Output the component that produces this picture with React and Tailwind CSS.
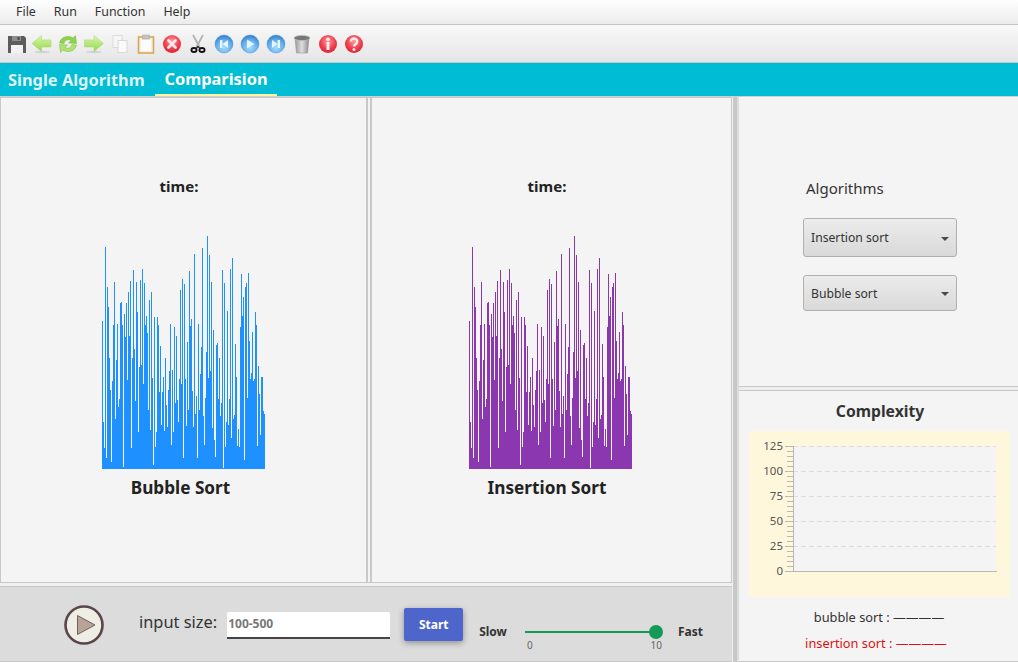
const FONT = 'font-["Noto_Sans","Open_Sans",sans-serif]'

// bar tops measured from the reference, bottom of the chart is 239
const BAR_TOPS = [
  273,576,654,52,684,171,231,384,480,696,453,285,156,567,390,282,531,507,219,216,285,711,252,321,219,450,186,318,153,654,384,120,357,513,156,246,606,411,150,405,117,462,159,285,258,309,540,210,600,186,444,705,261,651,606,261,285,486,348,585,486,441,603,384,525,591,480,423,282,645,420,606,291,519,318,510,576,447,180,462,147,684,162,447,588,336,540,123,288,267,483,591,72,552,498,684,282,540,432,351,54,558,645,504,366,18,444,75,423,156,594,300,630,681,345,339,507,384,558,519,120,714,159,651,576,243,585,507,117,624,84,567,555,342,441,648,597,651,291,132,258,201,690,171,159,504,129,333,447,429,306,453,447,246,285,648,408,492,615,441,441,543,552,
]

function Bars({ color }) {
  return (
    <svg width="163" height="239" shapeRendering="crispEdges" className="block">
      {BAR_TOPS.map((t, i) => (
        <rect key={i} x={i} y={Math.round(t / 3)} width="1" height={239 - Math.round(t / 3)} fill={color} />
      ))}
    </svg>
  )
}

function Defs() {
  return (
    <svg width="0" height="0" className="absolute">
      <defs>
        <linearGradient id="grn" x1="0" y1="0" x2="0" y2="1">
          <stop offset="0" stopColor="#dcf7a8" />
          <stop offset="1" stopColor="#92d84e" />
        </linearGradient>
        <radialGradient id="red" cx="0.5" cy="0.35" r="0.7">
          <stop offset="0" stopColor="#ff9a9f" />
          <stop offset="0.6" stopColor="#ee3d4b" />
          <stop offset="1" stopColor="#d81f35" />
        </radialGradient>
        <radialGradient id="blu" cx="0.5" cy="0.7" r="0.7">
          <stop offset="0" stopColor="#a5dcfa" />
          <stop offset="0.6" stopColor="#62aeec" />
          <stop offset="1" stopColor="#2f7cc9" />
        </radialGradient>
        <linearGradient id="can" x1="0" y1="0" x2="1" y2="0">
          <stop offset="0" stopColor="#9a9a9a" />
          <stop offset="0.5" stopColor="#dedede" />
          <stop offset="1" stopColor="#8a8a8a" />
        </linearGradient>
      </defs>
    </svg>
  )
}

const Ico = ({ children }) => (
  <svg width="20" height="20" viewBox="0 0 20 20" className="block shrink-0">{children}</svg>
)

const IconSave = () => (
  <Ico>
    <path d="M2 2h16l2 2v15H2z" fill="#5c5c5c" />
    <rect x="6" y="2" width="9" height="5" fill="#8d8d8d" />
    <rect x="11.500" y="3" width="2" height="3" fill="#4c4c4c" />
    <rect x="5" y="11" width="12" height="8" fill="#f2f2f2" />
  </Ico>
)
const IconLeft = () => (
  <Ico>
    <ellipse cx="10" cy="18" rx="8" ry="1.200" fill="#d0d0d0" />
    <path d="M0 9.500 9.500 1.500v4.500H19v7H9.500v4.500z" fill="url(#grn)" stroke="#a5d56e" strokeWidth="0.500" />
  </Ico>
)
const IconRight = () => (
  <Ico>
    <ellipse cx="10" cy="18" rx="8" ry="1.200" fill="#d0d0d0" />
    <path d="M19.500 9.500 10 1.500v4.500H0.500v7H10v4.500z" fill="url(#grn)" stroke="#a5d56e" strokeWidth="0.500" />
  </Ico>
)
const IconRefresh = () => (
  <Ico>
    <path d="M1.500 9a8.500 8 0 0 1 13.500-5l2.500-2.500 1 8-8-.5 2.500-2.500a4.500 4.500 0 0 0-7 3z" fill="#8fd24e" stroke="#75bb38" strokeWidth="0.500" />
    <path d="M18.500 11a8.500 8 0 0 1-13.500 5l-2.500 2.500-1-8 8 .5-2.500 2.500a4.500 4.500 0 0 0 7-3z" fill="#afe070" stroke="#75bb38" strokeWidth="0.500" />
  </Ico>
)
const IconCopy = () => (
  <Ico>
    <rect x="3" y="1.500" width="9" height="12" fill="#f6f6f6" stroke="#dcdcdc" />
    <rect x="8" y="6.500" width="9" height="12" fill="#fafafa" stroke="#d8d8d8" />
  </Ico>
)
const IconClip = () => (
  <Ico>
    <rect x="2.500" y="3" width="15" height="16" fill="#f0f0ea" stroke="#d9a850" strokeWidth="1.600" />
    <rect x="6.500" y="1" width="7" height="4" fill="#c4c4bc" stroke="#a5a5a5" strokeWidth="0.500" />
    <rect x="5" y="6" width="10" height="11" fill="#fbfbfb" />
  </Ico>
)
const IconClose = () => (
  <Ico>
    <circle cx="10" cy="10" r="9" fill="url(#red)" />
    <path d="M6.500 6.500l7 7M13.500 6.500l-7 7" stroke="#ffe9e9" strokeWidth="2.800" strokeLinecap="round" />
  </Ico>
)
const IconCut = () => (
  <Ico>
    <path d="M5 1l6.500 12M15 1L8.500 13" stroke="#b4b4b4" strokeWidth="1.800" />
    <ellipse cx="6" cy="16" rx="2.600" ry="2" fill="none" stroke="#111" strokeWidth="1.800" />
    <ellipse cx="14" cy="16" rx="2.600" ry="2" fill="none" stroke="#111" strokeWidth="1.800" />
    <path d="M8 14.500l2-2 2 2" fill="none" stroke="#222" strokeWidth="1.200" />
  </Ico>
)
const Blue = ({ children }) => (
  <Ico>
    <circle cx="10" cy="10" r="9" fill="url(#blu)" stroke="#4d94d6" strokeWidth="0.500" />
    {children}
  </Ico>
)
const IconPrev = () => (
  <Blue>
    <rect x="6" y="6" width="2.400" height="8" fill="#e6f5fd" />
    <path d="M14 6v8L8.500 10z" fill="#e6f5fd" />
  </Blue>
)
const IconPlay = () => (
  <Blue>
    <path d="M7 5.500v9l7.500-4.500z" fill="#e6f5fd" />
  </Blue>
)
const IconNext = () => (
  <Blue>
    <rect x="11.600" y="6" width="2.400" height="8" fill="#e6f5fd" />
    <path d="M6 6v8l5.500-4z" fill="#e6f5fd" />
  </Blue>
)
const IconTrash = () => (
  <Ico>
    <path d="M3 4l1.500 15h11L17 4z" fill="url(#can)" stroke="#8a8a8a" strokeWidth="0.500" />
    <ellipse cx="10" cy="4" rx="8" ry="2.600" fill="#777" stroke="#bbb" strokeWidth="0.800" />
  </Ico>
)
const IconInfo = () => (
  <Ico>
    <circle cx="10" cy="10" r="9" fill="url(#red)" />
    <circle cx="10" cy="5.200" r="1.700" fill="#ffeeee" />
    <rect x="8.500" y="8" width="3" height="8" rx="0.500" fill="#ffeeee" />
  </Ico>
)
const IconHelp = () => (
  <Ico>
    <circle cx="10" cy="10" r="9" fill="url(#red)" />
    <path d="M6.800 7.500a3.200 3 0 1 1 4.800 2.600c-1 .7-1.600 1.100-1.600 2.400" fill="none" stroke="#ffeeee" strokeWidth="2.400" />
    <circle cx="10" cy="15.500" r="1.500" fill="#ffeeee" />
  </Ico>
)

function Dropdown({ label, className }) {
  return (
    <div className={`flex w-[154px] items-center justify-between rounded-[3px] border border-[#b0b0b0] bg-gradient-to-b from-[#ececec] to-[#d9d9d9] pl-[7px] pr-[7px] pt-[2px] text-[12.200px] text-[#333] ${className}`}>
      <span>{label}</span>
      <span className="h-0 w-0 border-x-[4px] border-t-[4px] border-x-transparent border-t-[#4a4a4a]" />
    </div>
  )
}

function ComplexityChart() {
  const ticks = []
  for (let v = 0; v <= 25; v++) {
    const y = 140 - v * 5
    ticks.push(<line key={v} x1={v % 5 === 0 ? 36 : 38} x2="44" y1={y + 0.500} y2={y + 0.500} stroke="#bdb8b0" />)
  }
  return (
    <svg width="261" height="166" className="block" shapeRendering="crispEdges">
      <rect x="44" y="15" width="203" height="125" fill="#f4f4f4" />
      {[15, 40, 65, 90, 115].map((y) => (
        <line key={y} x1="44" x2="247" y1={y + 0.500} y2={y + 0.500} stroke="#dcdcdc" strokeDasharray="5 3" />
      ))}
      {ticks}
      <line x1="44.500" x2="44.500" y1="15" y2="140" stroke="#b8b8b8" />
      <line x1="44" x2="248" y1="140.500" y2="140.500" stroke="#b8b8b8" />
      {[125, 100, 75, 50, 25, 0].map((v, i) => (
        <text key={v} x="34" y={19 + i * 25} textAnchor="end" fontSize="11.500" fill="#555" shapeRendering="auto">{v}</text>
      ))}
    </svg>
  )
}

export default function App() {
  return (
    <div className={`${FONT} relative flex h-[662px] w-[1018px] flex-col overflow-hidden bg-[#f4f4f4] text-[#333]`}>
      <Defs />

      {/* menu */}
      <div className="flex h-[25px] items-center gap-[18px] border-b border-[#c4c4c4] bg-gradient-to-b from-[#ffffff] to-[#ececec] pl-[16px] text-[12.400px] text-[#333]">
        <span>File</span>
        <span>Run</span>
        <span>Function</span>
        <span>Help</span>
      </div>

      {/* toolbar */}
      <div className="flex h-[38px] items-center gap-[6px] border-b border-[#c8c8c8] bg-gradient-to-b from-[#f8f8f8] to-[#e6e6e6] pl-[6px] pt-[1px]">
        <IconSave /><IconLeft /><IconRefresh /><IconRight /><IconCopy /><IconClip /><IconClose />
        <IconCut /><IconPrev /><IconPlay /><IconNext /><IconTrash /><IconInfo /><IconHelp />
      </div>

      {/* tabs */}
      <div className="flex h-[33px] items-stretch bg-[#00bcd4] text-[16.400px] font-bold">
        <div className="flex w-[155px] items-center pl-[8px] pt-[1px] text-[#dff3f6]">Single Algorithm</div>
        <div className="flex w-[122px] items-center justify-center border-b-[2px] border-[#fff59d] pt-[1px] text-white">Comparision</div>
      </div>

      <div className="flex min-h-0 flex-1 border-t border-[#d0d0d0]">
        {/* left */}
        <div className="flex w-[732px] flex-col">
          <div className="flex h-[486px] border-y border-l border-[#c8c8c8]">
            <div className="flex w-[367px] flex-col items-center border-r-2 border-[#c8c8c8] pt-[78px]">
              <div className="mr-[9px] text-[15px] font-bold leading-[20px] text-[#222]">time:</div>
              <div className="mt-[34px]"><Bars color="#1e90ff" /></div>
              <div className="mr-[6px] mt-[7px] text-[17.200px] font-bold leading-[24px] text-[#222]">Bubble Sort</div>
            </div>
            <div className="ml-[2px] flex flex-1 flex-col items-center border-x-2 border-[#c8c8c8] border-r-[1px] pt-[78px]">
              <div className="mr-[9px] text-[15px] font-bold leading-[20px] text-[#222]">time:</div>
              <div className="mr-[3px] mt-[34px]"><Bars color="#8a37b0" /></div>
              <div className="mr-[9px] mt-[7px] text-[17.200px] font-bold leading-[24px] text-[#222]">Insertion Sort</div>
            </div>
          </div>
          <div className="h-[4px] border-b border-[#c8c8c8] bg-[#f0f0f0]" />
          <div className="flex flex-1 items-center border-b border-[#c8c8c8] bg-[#dcdcdc] pl-[64px] pt-[2px]">
            <svg width="40" height="40" viewBox="0 0 40 40" className="block shrink-0">
              <circle cx="20" cy="20" r="18.500" fill="#efeee4" stroke="#5a4649" strokeWidth="2.600" />
              <path d="M13.500 10.500v19L31 20z" fill="#b7a497" stroke="#5a4649" strokeWidth="0.800" />
            </svg>
            <span className="mb-[5px] ml-[35px] text-[16.400px] text-[#333]">input size:</span>
            <div className="ml-[10px] flex h-[27px] w-[163px] items-center rounded-t-[2px] border-b-2 border-[#444] bg-white pl-[1px] text-[12px] font-bold text-[#777]">100-500</div>
            <div className="mb-[1px] ml-[14px] flex h-[33px] w-[59px] items-center justify-center rounded-[2px] bg-[#4e65cc] text-[12px] font-bold text-white shadow-[0_2px_6px_rgba(0,0,0,0.35)]">Start</div>
            <span className="ml-[16px] mt-[14px] text-[12px] font-bold text-[#333]">Slow</span>
            <div className="relative ml-[18px] mt-[14px] h-[2px] w-[131px] bg-[#159a56]">
              <span className="absolute right-[-7px] top-[-6px] h-[14px] w-[14px] rounded-full bg-[#159a56]" />
              <span className="absolute left-[2px] top-[7px] text-[10px] text-[#666]">0</span>
              <span className="absolute right-[-6px] top-[7px] text-[10px] text-[#666]">10</span>
            </div>
            <span className="ml-[22px] mt-[14px] text-[12px] font-bold text-[#333]">Fast</span>
          </div>
        </div>

        {/* divider */}
        <div className="flex w-[7px] shrink-0 border-r-2 border-[#dcdcdc]">
          <div className="w-[1px] bg-[#f0f0f0]" />
          <div className="w-[4px] bg-[#c8c8c8]" />
        </div>

        {/* right */}
        <div className="flex min-w-0 flex-1 flex-col">
          <div className="h-[289px] pl-[64px] pt-[80px]">
            <div className="pl-[3px] text-[15px] leading-[22px] text-[#333]">Algorithms</div>
            <Dropdown label="Insertion sort" className="mt-[19px] h-[39px]" />
            <Dropdown label="Bubble sort" className="mt-[18px] h-[36px]" />
          </div>
          <div className="h-[5px] border-y border-[#c8c8c8] bg-[#ededed]" />
          <div className="flex flex-1 flex-col items-center border-b border-[#c8c8c8]">
            <div className="ml-[3px] mt-[9px] text-[15.700px] font-bold leading-[22px] text-[#333]">Complexity</div>
            <div className="ml-[2px] mt-[9px] w-[261px] bg-[#fff7dc]"><ComplexityChart /></div>
            <div className="ml-[1px] mt-[10px] text-[12.800px] leading-[20px] text-[#333]">bubble sort : ————</div>
            <div className="mr-[5px] mt-[6px] text-[12.800px] leading-[20px] text-[#e01010]">insertion sort : ————</div>
          </div>
        </div>
      </div>
    </div>
  )
}
